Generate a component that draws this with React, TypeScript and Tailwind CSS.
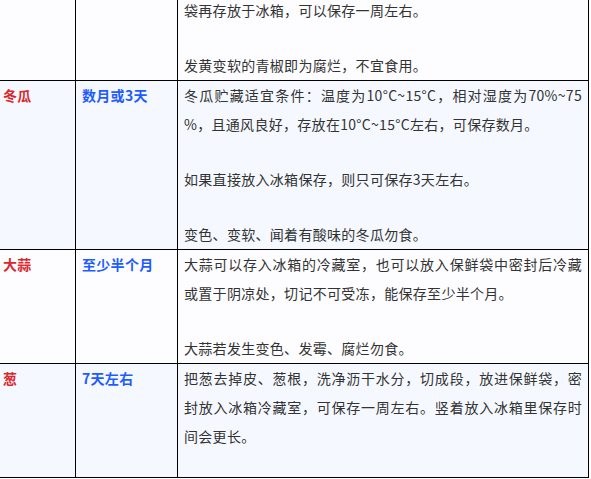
const font = { fontFamily: '"Noto Sans CJK SC", "Noto Sans", sans-serif' };

type Row = {
  name: string;
  time: string;
  paragraphs: string[][];
  bg: string;
  extraBottom?: boolean;
};

const rows: Row[] = [
  {
    name: '',
    time: '',
    bg: 'bg-[#fdfdff]',
    paragraphs: [['袋再存放于冰箱，可以保存一周左右。'], ['发黄变软的青椒即为腐烂，不宜食用。']],
  },
  {
    name: '冬瓜',
    time: '数月或3天',
    bg: 'bg-[#f5f9ff]',
    paragraphs: [
      ['冬瓜贮藏适宜条件：温度为10°C~15°C，相对湿度为70%~75', '%，且通风良好，存放在10°C~15°C左右，可保存数月。'],
      ['如果直接放入冰箱保存，则只可保存3天左右。'],
      ['变色、变软、闻着有酸味的冬瓜勿食。'],
    ],
  },
  {
    name: '大蒜',
    time: '至少半个月',
    bg: 'bg-[#fdfdff]',
    paragraphs: [
      ['大蒜可以存入冰箱的冷藏室，也可以放入保鲜袋中密封后冷藏', '或置于阴凉处，切记不可受冻，能保存至少半个月。'],
      ['大蒜若发生变色、发霉、腐烂勿食。'],
    ],
  },
  {
    name: '葱',
    time: '7天左右',
    bg: 'bg-[#f5f9ff]',
    extraBottom: true,
    paragraphs: [
      [
        '把葱去掉皮、葱根，洗净沥干水分，切成段，放进保鲜袋，密',
        '封放入冰箱冷藏室，可保存一周左右。竖着放入冰箱里保存时',
        '间会更长。',
      ],
    ],
  },
];

function Paragraph({ lines }: { lines: string[] }) {
  return (
    <p className="mb-[26px] last:mb-0">
      {lines.map((line, i) => (
        <span
          key={i}
          className={
            i < lines.length - 1
              ? 'block whitespace-nowrap text-justify [text-align-last:justify]'
              : 'block whitespace-nowrap'
          }
        >
          {line}
        </span>
      ))}
    </p>
  );
}

export default function App() {
  return (
    <div className="w-[591px] h-[479px] overflow-hidden bg-white" style={font}>
      <div className="ml-[-4px] mt-[-4px] w-[593px] border-x border-black text-[14px] leading-[29px] tracking-[0.3px]">
        {rows.map((row, i) => (
          <div key={i} className={`grid grid-cols-[79px_102px_410px] border-b border-black ${row.bg}`}>
            {/* 名称 */}
            <div className="border-r border-black px-[6px] font-bold text-[#d9282e]">{row.name}</div>
            {/* 保存时间 */}
            <div className="border-r border-black px-[6px] font-bold text-[#1f5cff]">{row.time}</div>
            {/* 说明 */}
            <div className={`px-[6px] text-[#333333] ${row.extraBottom ? 'pb-[26px]' : ''}`}>
              {row.paragraphs.map((p, j) => (
                <Paragraph key={j} lines={p} />
              ))}
            </div>
          </div>
        ))}
      </div>
    </div>
  );
}
